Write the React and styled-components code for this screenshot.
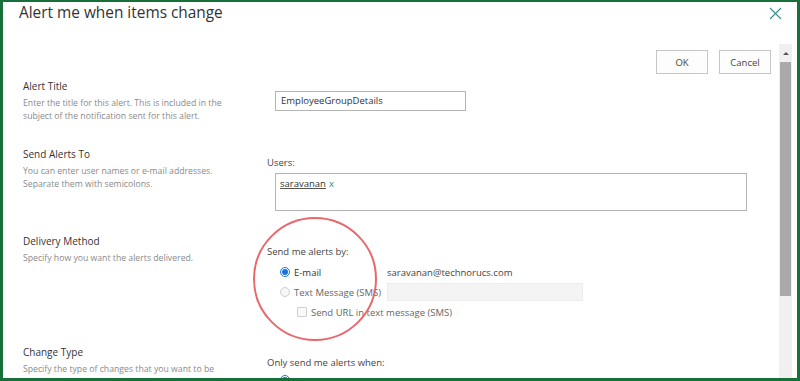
import React from "react";
import styled, { createGlobalStyle } from "styled-components";

const Global = createGlobalStyle`
  html, body { margin: 0; padding: 0; background: #fff; }
  body { font-family: "Open Sans", "Noto Sans", sans-serif; color: #333; }
  * { box-sizing: border-box; }
`;

const Frame = styled.div`
  width: 800px;
  height: 381px;
  border: 3px solid #17703a;
  border-top-width: 2px;
  display: flex;
  flex-direction: column;
  overflow: hidden;
  background: #fff;
`;

const Header = styled.div`
  height: 42px;
  flex: none;
  display: flex;
  align-items: flex-start;
  justify-content: space-between;
  padding: 0 14px 0 16px;
`;

const Title = styled.h1`
  margin: 0;
  font-size: 15.4px;
  line-height: 22px;
  font-weight: 400;
  color: #333;
`;

const Close = styled.button`
  margin-top: 5px;
  width: 14px;
  height: 14px;
  padding: 0;
  border: 0;
  background: none;
  display: flex;
`;

const Body = styled.div`
  flex: 1;
  min-height: 0;
  display: flex;
  overflow: hidden;
`;

const Content = styled.div`
  flex: 1;
  min-width: 0;
  padding: 6px 8px 0 20px;
`;

const ButtonRow = styled.div`
  display: flex;
  justify-content: flex-end;
  gap: 11px;
  margin-bottom: 4px;
`;

const Button = styled.button`
  width: 52px;
  height: 24px;
  border: 1px solid #c6c6c6;
  background: #fdfdfd;
  font-family: inherit;
  font-size: 9.5px;
  color: #444;
  padding: 0;
`;

const Section = styled.section`
  position: relative;
  display: grid;
  grid-template-columns: 244px 1fr;
  padding-right: 24px;
  padding-bottom: ${(p) => p.$pb}px;
`;

const Left = styled.div``;

const Label = styled.div`
  font-size: 10px;
  line-height: 16px;
  color: #333;
`;

const Desc = styled.div`
  margin-top: 3px;
  font-size: 8.7px;
  line-height: 13px;
  color: #8a8a8a;
  width: 220px;
`;

const Right = styled.div`
  position: relative;
  padding-top: ${(p) => p.$pt}px;
`;

const SmallLabel = styled.div`
  font-size: 9.5px;
  line-height: 14px;
  color: #444;
`;

const TextInput = styled.div`
  margin-left: 8px;
  width: ${(p) => p.$w}px;
  height: ${(p) => p.$h}px;
  border: 1px solid #b4b4b4;
  padding: ${(p) => p.$pad};
  font-size: 9.5px;
  line-height: 14px;
  color: #333;
`;

const UsersBox = styled(TextInput)`
  margin-top: 3px;
  width: auto;
`;

const Person = styled.span`
  color: #333;
  text-decoration: underline;
  text-decoration-color: #555;
`;

const Remove = styled.span`
  color: #2a8c8c;
  margin-left: 3px;
`;

const OptionRow = styled.div`
  display: flex;
  align-items: center;
  height: 20px;
  padding-left: ${(p) => p.$indent}px;
  margin-top: ${(p) => p.$mt || 0}px;
`;

const OptionMain = styled.div`
  display: flex;
  align-items: center;
  width: ${(p) => (p.$w ? p.$w + "px" : "auto")};
  gap: 4px;
  font-size: 9.5px;
  color: ${(p) => (p.$muted ? "#666" : "#333")};
`;

const Radio = styled.span`
  width: 10px;
  height: 10px;
  border-radius: 50%;
  flex: none;
  border: 1px solid ${(p) => (p.$on ? "#1a73d9" : "#cfcfcf")};
  background: ${(p) => (p.$on ? "#fff" : "#f7f7f7")};
  display: flex;
  align-items: center;
  justify-content: center;
  &::after {
    content: "";
    width: 6px;
    height: 6px;
    border-radius: 50%;
    background: ${(p) => (p.$on ? "#1a73d9" : "transparent")};
  }
`;

const Check = styled.span`
  width: 10px;
  height: 10px;
  flex: none;
  border: 1px solid #cfcfcf;
  border-radius: 1px;
  background: #fafafa;
`;

const Address = styled.span`
  font-size: 9.5px;
  color: #444;
`;

const SmsInput = styled.div`
  width: 196px;
  height: 18px;
  background: #f4f4f4;
  border: 1px solid #ececec;
`;

const Highlight = styled.div`
  position: absolute;
  left: -14px;
  top: -16px;
  width: 124px;
  height: 124px;
  border: 2px solid #e8686c;
  border-radius: 50%;
  pointer-events: none;
`;

const Scrollbar = styled.div`
  width: 13px;
  flex: none;
  margin-right: 5px;
  background: #f0f0f0;
  display: flex;
  flex-direction: column;
  align-items: stretch;
`;

const ArrowUp = styled.div`
  height: 18px;
  display: flex;
  align-items: center;
  justify-content: center;
  &::before {
    content: "";
    border-left: 3px solid transparent;
    border-right: 3px solid transparent;
    border-bottom: 3px solid #555;
  }
`;

const Thumb = styled.div`
  height: 234px;
  margin: 0 1px;
  background: #a9a9a9;
`;

export default function App() {
  return (
    <>
      <Global />
      <Frame>
        <Header>
          <Title>Alert me when items change</Title>
          <Close aria-label="Close">
            <svg width="13" height="13" viewBox="0 0 13 13">
              <path d="M1 1 L12 12 M12 1 L1 12" stroke="#3a8d8d" strokeWidth="1.1" fill="none" />
            </svg>
          </Close>
        </Header>
        <Body>
          <Content>
            <ButtonRow>
              <Button>OK</Button>
              <Button>Cancel</Button>
            </ButtonRow>

            <Section $pb={23}>
              <Left>
                <Label>Alert Title</Label>
                <Desc>Enter the title for this alert. This is included in the subject of the notification sent for this alert.</Desc>
              </Left>
              <Right $pt={13}>
                <TextInput $w={191} $h={20} $pad="2px 5px">EmployeeGroupDetails</TextInput>
              </Right>
            </Section>

            <Section $pb={22}>
              <Left>
                <Label>Send Alerts To</Label>
                <Desc>You can enter user names or e-mail addresses. Separate them with semicolons.</Desc>
              </Left>
              <Right $pt={10}>
                <SmallLabel>Users:</SmallLabel>
                <UsersBox $h={38} $pad="3px 4px">
                  <Person>saravanan</Person>
                  <Remove>x</Remove>
                </UsersBox>
              </Right>
            </Section>

            <Section $pb={22}>
              <Left>
                <Label>Delivery Method</Label>
                <Desc>Specify how you want the alerts delivered.</Desc>
              </Left>
              <Right $pt={12}>
                <SmallLabel>Send me alerts by:</SmallLabel>
                <OptionRow $indent={13} $mt={3}>
                  <OptionMain $w={107}>
                    <Radio $on />
                    E-mail
                  </OptionMain>
                  <Address>saravanan@technorucs.com</Address>
                </OptionRow>
                <OptionRow $indent={13}>
                  <OptionMain $w={107} $muted>
                    <Radio />
                    Text Message (SMS)
                  </OptionMain>
                  <SmsInput />
                </OptionRow>
                <OptionRow $indent={30}>
                  <OptionMain $muted>
                    <Check />
                    Send URL in text message (SMS)
                  </OptionMain>
                </OptionRow>
                <Highlight />
              </Right>
            </Section>

            <Section $pb={0}>
              <Left>
                <Label>Change Type</Label>
                <Desc>Specify the type of changes that you want to be</Desc>
              </Left>
              <Right $pt={12}>
                <SmallLabel>Only send me alerts when:</SmallLabel>
                <OptionRow $indent={13} $mt={0}>
                  <Radio $on aria-label="All changes" />
                </OptionRow>
              </Right>
            </Section>
          </Content>
          <Scrollbar>
            <ArrowUp />
            <Thumb />
          </Scrollbar>
        </Body>
      </Frame>
    </>
  );
}
